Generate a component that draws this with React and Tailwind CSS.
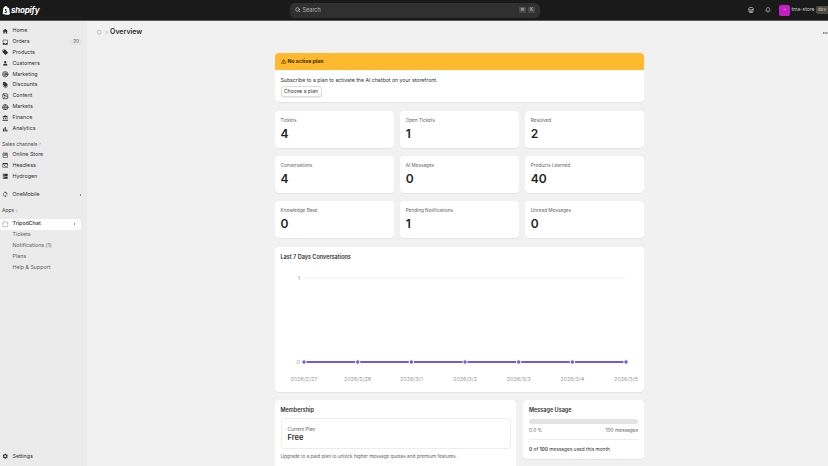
import { Search, Bell, Target, Image, Globe, Store, ChevronRight, Ellipsis, TriangleAlert, SquareDashed } from "lucide-react";
import { MdHome, MdInbox, MdLocalOffer, MdPerson, MdDiscount, MdAccountBalance, MdBarChart, MdSettings, MdStorefront, MdOutlineTerminal, MdDns, MdOutlineSync } from "react-icons/md";

const mainNav = [
  { label: "Home", icon: <MdHome /> },
  { label: "Orders", icon: <MdInbox />, badge: "20" },
  { label: "Products", icon: <MdLocalOffer /> },
  { label: "Customers", icon: <MdPerson /> },
  { label: "Marketing", icon: <Target strokeWidth={2.5} /> },
  { label: "Discounts", icon: <MdDiscount /> },
  { label: "Content", icon: <Image strokeWidth={2.5} /> },
  { label: "Markets", icon: <Globe strokeWidth={2.5} /> },
  { label: "Finance", icon: <MdAccountBalance /> },
  { label: "Analytics", icon: <MdBarChart /> },
];

const channels = [
  { label: "Online Store", icon: <MdStorefront /> },
  { label: "Headless", icon: <MdOutlineTerminal /> },
  { label: "Hydrogen", icon: <MdDns /> },
];

const stats = [
  ["Tickets", "4"],
  ["Open Tickets", "1"],
  ["Resolved", "2"],
  ["Conversations", "4"],
  ["AI Messages", "0"],
  ["Products Learned", "40"],
  ["Knowledge Base", "0"],
  ["Pending Notifications", "1"],
  ["Unread Messages", "0"],
];

const days = ["2026/2/27", "2026/2/28", "2026/3/1", "2026/3/2", "2026/3/3", "2026/3/4", "2026/3/5"];

function NavRow({ icon, label, badge, arrow, active }) {
  return (
    <div className={`flex h-[10.9px] items-center pr-[6px] ${active ? "mr-[6px] rounded-r-[3px] bg-white font-medium" : ""}`}>
      <span className="flex w-[12.5px] shrink-0 items-center justify-center pr-[2px] text-[#303030] [&>svg]:h-[6.5px] [&>svg]:w-[6.5px]">{icon}</span>
      <span className="flex-1">{label}</span>
      {badge && <span className="-mr-[1px] rounded-full bg-[#e3e3e3] px-[3px] text-[4.6px] leading-[6.5px] text-[#616161]">{badge}</span>}
      {arrow && <span className="h-0 w-0 border-y-[1.3px] border-l-[1.6px] border-y-transparent border-l-[#303030]" />}
    </div>
  );
}

function SectionLabel({ children, className }) {
  return (
    <div className={`flex items-center gap-[1px] pl-[2px] text-[5px] text-[#4a4a4a] ${className}`}>
      {children}
      <ChevronRight className="h-[4px] w-[4px]" strokeWidth={2} />
    </div>
  );
}

function Card({ className, children }) {
  return <div className={`rounded-[4px] bg-white shadow-[0_0.5px_0.5px_rgba(0,0,0,0.1)] ${className}`}>{children}</div>;
}

function Chart() {
  const xs = days.map((_, i) => 29 + i * 53.67);
  return (
    <svg viewBox="0 0 369 125" className="block h-[125px] w-[369px]">
      <line x1="29" x2="351" y1="18" y2="18" stroke="#ebebeb" strokeWidth="0.7" />
      <text x="25" y="20" textAnchor="end" fontSize="5.4" fill="#999">1</text>
      <text x="25" y="104" textAnchor="end" fontSize="5.4" fill="#999">0</text>
      <line x1="29" x2="351" y1="102" y2="102" stroke="#7058ea" strokeWidth="2" />
      {xs.map((x, i) => (
        <g key={days[i]}>
          <circle cx={x} cy="102" r="2.2" fill="#7058ea" stroke="#fff" strokeWidth="1" />
          <text x={x} y="121" textAnchor="middle" fontSize="5.4" fill="#999">{days[i]}</text>
        </g>
      ))}
    </svg>
  );
}

export default function App() {
  return (
    <div className="flex h-[466px] w-[828px] flex-col overflow-hidden bg-[#f1f1f1] font-['Inter',sans-serif] text-[#303030]">
      {/* Top bar */}
      <header className="flex h-[21px] shrink-0 items-center border-b border-[#5a5a5a] bg-[#1a1a1a] text-white">
        <div className="flex w-[290px] items-center pl-[2px]">
          <svg viewBox="0 0 24 27" className="h-[9px] w-[8px]">
            <path d="M4 6 L2 24 L18 27 L24 24 L21 6 L17 5 C16 1 13 0 11 1 C8 1 6 3 5.5 5.5 Z" fill="#fff" />
            <path d="M14 9 C11 8 8 10 8 12 C8 15 13 15 13 17.500 C13 19 10 19 8 18 L7.500 20.500 C10 22 15 21.500 15.500 17.500 C15.500 14 11 14 11 12 C11 11 13 11 14.500 11.500 Z" fill="#1a1a1a" />
          </svg>
          <span className="ml-[1px] text-[8px] font-bold italic tracking-[-0.2px]">shopify</span>
        </div>
        <div className="flex h-[15px] w-[250px] items-center rounded-[5px] bg-[#303030] px-[5px] text-[5.5px] text-[#b5b5b5]">
          <Search className="h-[5.5px] w-[5.5px] text-[#e3e3e3]" strokeWidth={2.5} />
          <span className="ml-[2px] flex-1">Search</span>
          <span className="mr-[2px] flex h-[6px] w-[7px] items-center justify-center rounded-[1px] bg-[#484848] text-[4.5px] text-[#d0d0d0]">⌘</span>
          <span className="flex h-[6px] w-[7px] items-center justify-center rounded-[1px] bg-[#484848] text-[4.5px] text-[#d0d0d0]">K</span>
        </div>
        <div className="flex flex-1 items-center justify-end">
          <Store className="mr-[10.500px] h-[6px] w-[6px] text-[#e3e3e3]" strokeWidth={2.5} />
          <Bell className="mr-[8px] h-[6px] w-[6px] text-[#e3e3e3]" strokeWidth={2} />
          <span className="flex h-[11px] w-[11px] items-center justify-center rounded-[2px] bg-[#c41fc4] text-[4.5px] font-semibold">-</span>
          <span className="ml-[1.500px] text-[5px] text-[#c9c9c9]">tma-store</span>
          <span className="ml-[1.500px] w-[12px] overflow-hidden rounded-l-[2px] bg-[#4d4a42] py-[1px] pl-[2px] text-[4.6px] leading-[6px] text-[#c9c9c9]">dev</span>
        </div>
      </header>

      <div className="flex min-h-0 flex-1">
        {/* Sidebar */}
        <aside className="flex w-[87px] shrink-0 flex-col bg-[#ebebeb] pt-[4.500px] text-[5.3px] text-[#303030]">
          {mainNav.map((item) => (
            <NavRow key={item.label} {...item} />
          ))}
          <SectionLabel className="mt-[6.500px] h-[7px]">Sales channels</SectionLabel>
          <div className="mt-[1.500px]">
            {channels.map((item) => (
              <NavRow key={item.label} {...item} />
            ))}
          </div>
          <div className="mt-[7px]">
            <NavRow label="OneMobile" icon={<MdOutlineSync />} arrow />
          </div>
          <SectionLabel className="mt-[8.500px] h-[5px]">Apps</SectionLabel>
          <div className="mt-[5.500px]">
            <NavRow label="TripodChat" icon={<SquareDashed className="text-[#9a9a9a]" strokeWidth={3} />} arrow active />
          </div>
          <div className="pl-[12.500px] text-[#616161]">
            {["Tickets", "Notifications (1)", "Plans", "Help & Support"].map((label) => (
              <div key={label} className="flex h-[10.9px] items-center">{label}</div>
            ))}
          </div>
          <div className="mt-auto pb-[4px]">
            <NavRow label="Settings" icon={<MdSettings />} />
          </div>
        </aside>

        {/* Main */}
        <main className="min-w-0 flex-1">
          <div className="flex h-[22px] items-center pl-[10px] pt-[1px]">
            <SquareDashed className="h-[4.500px] w-[4.500px] text-[#a0a0a0]" strokeWidth={3} />
            <ChevronRight className="ml-[2px] mr-[1.500px] h-[5px] w-[5px] text-[#616161]" strokeWidth={2} />
            <h1 className="flex-1 text-[7px] font-semibold">Overview</h1>
            <Ellipsis className="h-[6px] w-[6px] text-[#616161]" strokeWidth={3} />
          </div>

          <div className="ml-[188px] mt-[10px] flex w-[369px] flex-col">
            <Card className="h-[49px] overflow-hidden">
              <div className="flex h-[17px] items-center bg-[#ffb92e] pl-[5.500px] text-[5.200px] font-bold text-[#3a2c08]">
                <TriangleAlert className="mr-[1.500px] h-[5.500px] w-[5.500px]" strokeWidth={2.5} />
                No active plan
              </div>
              <div className="pl-[5.500px] pt-[6.500px] text-[5.200px]">
                <p className="leading-[7px]">Subscribe to a plan to activate the AI chatbot on your storefront.</p>
                <button className="mt-[2.500px] h-[11px] w-[41px] rounded-[3px] border border-[#dcdcdc] bg-white text-[5px] shadow-[0_0.5px_0.5px_rgba(0,0,0,0.15)]">
                  Choose a plan
                </button>
              </div>
            </Card>

            <div className="mt-[9px] grid grid-cols-3 gap-x-[6.500px] gap-y-[8px]">
              {stats.map(([label, value]) => (
                <Card key={label} className="h-[37px] pl-[5.500px] pt-[6px]">
                  <div className="text-[4.700px] leading-[6px] text-[#616161]">{label}</div>
                  <div className="mt-[2.500px] text-[12px] font-semibold leading-[16px] text-[#252525]">{value}</div>
                </Card>
              ))}
            </div>

            <Card className="mt-[9px] h-[145px]">
              <h2 className="pl-[5.500px] pt-[6.500px] text-[5.500px] font-semibold leading-[6px]">Last 7 Days Conversations</h2>
              <Chart />
            </Card>

            <div className="mt-[8px] flex gap-[7px]">
              <Card className="h-[70px] w-[241px] px-[5.500px] pt-[7px]">
                <h2 className="text-[5.500px] font-semibold leading-[6px]">Membership</h2>
                <div className="mt-[5px] h-[31px] rounded-[3px] border border-[#ececec] pl-[6px] pt-[6.500px]">
                  <div className="text-[4.700px] leading-[6px] text-[#616161]">Current Plan</div>
                  <div className="mt-[1.500px] text-[7.500px] font-semibold leading-[10px]">Free</div>
                </div>
                <p className="mt-[4px] text-[4.700px] leading-[6px] text-[#616161]">
                  Upgrade to a paid plan to unlock higher message quotas and premium features.
                </p>
              </Card>
              <Card className="h-[59px] flex-1 px-[6px] pt-[7px]">
                <h2 className="text-[5.500px] font-semibold leading-[6px]">Message Usage</h2>
                <div className="mt-[6px] h-[4.500px] rounded-full bg-[#e3e3e3]" />
                <div className="mt-[3px] flex justify-between border-b border-[#ededed] pb-[6px] text-[4.800px] leading-[6px] text-[#616161]">
                  <span>0.0 %</span>
                  <span>100 messages</span>
                </div>
                <p className="mt-[6px] text-[4.800px] leading-[6px]">
                  <b className="font-semibold">0</b> of <b className="font-semibold">100</b> messages used this month
                </p>
              </Card>
            </div>
          </div>
        </main>
      </div>
    </div>
  );
}
